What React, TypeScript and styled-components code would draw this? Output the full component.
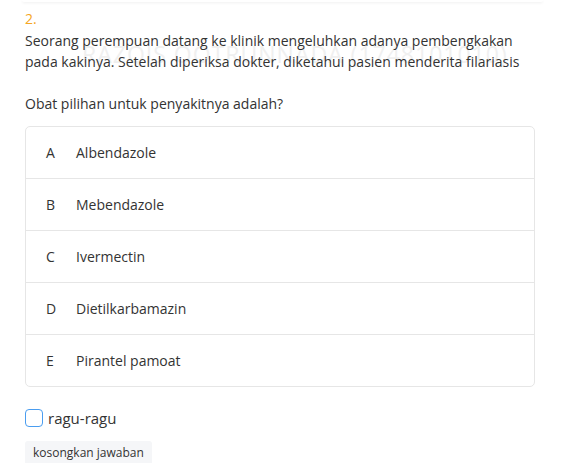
import React from "react";
import styled, { createGlobalStyle } from "styled-components";

const Global = createGlobalStyle`
  html, body { margin: 0; padding: 0; background: #fff; }
  body { font-family: "Open Sans", "Noto Sans", sans-serif; color: #333; }
`;

const Page = styled.div`
  width: 568px;
  height: 463px;
  overflow: hidden;
  padding: 0 33px 0 25px;
  box-sizing: border-box;
  position: relative;
`;

const TopEdge = styled.div`
  height: 2px;
  margin: 0 -8px 0 -3px;
  background: #fff;
  box-shadow: 0 1px 3px rgba(0, 0, 0, 0.07);
  border-radius: 0 0 4px 4px;
`;

const Number = styled.div`
  color: #f5a623;
  font-size: 14px;
  line-height: 22px;
  margin-top: 6px;
`;

const Question = styled.div`
  position: relative;
  font-size: 14px;
  line-height: 21px;
  color: #333;
`;

const Para = styled.p<{ $last?: boolean }>`
  margin: 0 0 ${(p) => (p.$last ? "0" : "21px")};
  position: relative;
  z-index: 1;
`;

const Watermark = styled.div`
  position: absolute;
  left: 57px;
  top: 14px;
  font-size: 23px;
  letter-spacing: 1px;
  color: #f0f0f0;
  white-space: nowrap;
  z-index: 0;
  pointer-events: none;
`;

const Options = styled.div`
  margin-top: 12px;
  border: 1px solid #e6e6e6;
  border-radius: 5px;
  display: flex;
  flex-direction: column;
`;

const Option = styled.div<{ $last?: boolean }>`
  height: 51px;
  display: flex;
  align-items: center;
  border-bottom: ${(p) => (p.$last ? "none" : "1px solid #e6e6e6")};
  font-size: 14px;
  color: #333;
`;

const Letter = styled.span`
  width: 50px;
  padding-left: 20px;
  box-sizing: border-box;
  color: #333;
`;

const Doubt = styled.label`
  margin-top: 21px;
  display: flex;
  align-items: center;
  gap: 5px;
  font-size: 15px;
  line-height: 20px;
  color: #333;
`;

const Box = styled.span`
  width: 18px;
  height: 18px;
  box-sizing: border-box;
  border: 1.5px solid #4a9df0;
  border-radius: 4px;
`;

const ClearButton = styled.button`
  display: block;
  margin-top: 13px;
  font-family: "Open Sans", "Noto Sans", sans-serif;
  font-size: 12px;
  color: #333;
  background: #f5f6f8;
  border: none;
  border-radius: 3px;
  padding: 4px 8px 6px;
  line-height: 16px;
`;

const options = [
  ["A", "Albendazole"],
  ["B", "Mebendazole"],
  ["C", "Ivermectin"],
  ["D", "Dietilkarbamazin"],
  ["E", "Pirantel pamoat"],
];

export default function App() {
  return (
    <>
      <Global />
      <Page>
        <TopEdge />
        <Number>2.</Number>
        <Question>
          <Watermark>RAZQIS QOTRUNNADA (1748101010)</Watermark>
          <Para>
            Seorang perempuan datang ke klinik mengeluhkan adanya pembengkakan pada kakinya. Setelah diperiksa dokter, diketahui pasien menderita filariasis
          </Para>
          <Para $last>Obat pilihan untuk penyakitnya adalah?</Para>
        </Question>
        <Options>
          {options.map(([l, t], i) => (
            <Option key={l} $last={i === options.length - 1}>
              <Letter>{l}</Letter>
              {t}
            </Option>
          ))}
        </Options>
        <Doubt>
          <Box />
          ragu-ragu
        </Doubt>
        <ClearButton>kosongkan jawaban</ClearButton>
      </Page>
    </>
  );
}
